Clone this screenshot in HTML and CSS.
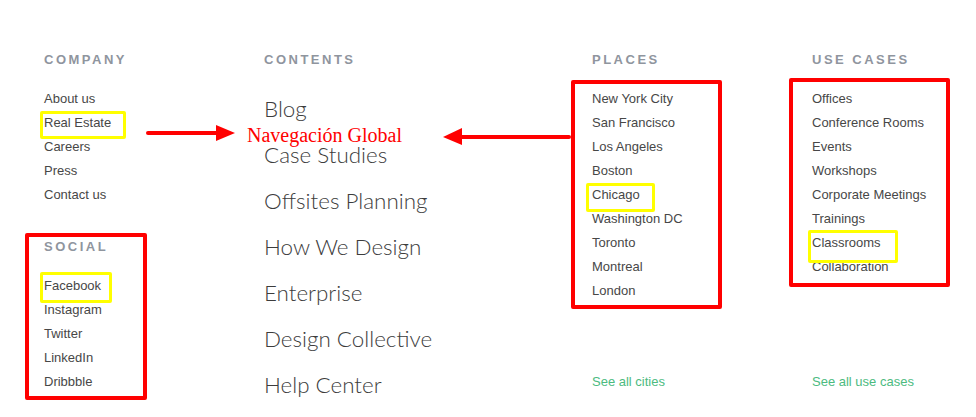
FILE: index.html
```html
<!DOCTYPE html>
<html lang="en">
<head>
<meta charset="utf-8">
<title>Footer navigation</title>
<link rel="stylesheet" href="styles.css">
</head>
<body>
<div class="page">
  <footer class="footer">
    <div class="col col-company">
      <h3 class="heading">COMPANY</h3>
      <ul class="links">
        <li>About us</li>
        <li>Real Estate</li>
        <li>Careers</li>
        <li>Press</li>
        <li>Contact us</li>
      </ul>
      <h3 class="heading heading-social">SOCIAL</h3>
      <ul class="links">
        <li>Facebook</li>
        <li>Instagram</li>
        <li>Twitter</li>
        <li>LinkedIn</li>
        <li>Dribbble</li>
      </ul>
    </div>
    <div class="col col-contents">
      <h3 class="heading">CONTENTS</h3>
      <ul class="big-links">
        <li>Blog</li>
        <li>Case Studies</li>
        <li>Offsites Planning</li>
        <li>How We Design</li>
        <li>Enterprise</li>
        <li>Design Collective</li>
        <li>Help Center</li>
      </ul>
    </div>
    <div class="col col-places">
      <h3 class="heading">PLACES</h3>
      <ul class="links">
        <li>New York City</li>
        <li>San Francisco</li>
        <li>Los Angeles</li>
        <li>Boston</li>
        <li>Chicago</li>
        <li>Washington DC</li>
        <li>Toronto</li>
        <li>Montreal</li>
        <li>London</li>
      </ul>
      <div class="see-all">See all cities</div>
    </div>
    <div class="col col-uses">
      <h3 class="heading">USE CASES</h3>
      <ul class="links">
        <li>Offices</li>
        <li>Conference Rooms</li>
        <li>Events</li>
        <li>Workshops</li>
        <li>Corporate Meetings</li>
        <li>Trainings</li>
        <li>Classrooms</li>
        <li>Collaboration</li>
      </ul>
      <div class="see-all">See all use cases</div>
    </div>
  </footer>

  <div class="annotations">
    <div class="box red box-social"></div>
    <div class="box red box-places"></div>
    <div class="box red box-uses"></div>
    <div class="box yellow box-realestate"></div>
    <div class="box yellow box-facebook"></div>
    <div class="box yellow box-chicago"></div>
    <div class="box yellow box-classrooms"></div>
    <svg class="arrow arrow-left" width="100" height="24" viewBox="0 0 100 24">
      <line x1="2" y1="10" x2="72" y2="10" stroke="#ff0000" stroke-width="4" stroke-linecap="round"/>
      <polygon points="70,2 89,10 70,18" fill="#ff0000"/>
    </svg>
    <svg class="arrow arrow-right" width="140" height="24" viewBox="0 0 140 24">
      <line x1="16" y1="11" x2="128" y2="11" stroke="#ff0000" stroke-width="4" stroke-linecap="round"/>
      <polygon points="2,11 21,2 21,19" fill="#ff0000"/>
    </svg>
    <div class="label">Navegación Global</div>
  </div>
</div>
</body>
</html>
```

FILE: styles.css
```css
* {
  box-sizing: border-box;
}

html, body {
  margin: 0;
  padding: 0;
  background: #ffffff;
}

.page {
  position: relative;
  width: 976px;
  height: 417px;
  overflow: hidden;
}

.footer {
  display: flex;
  align-items: stretch;
  padding: 52px 0 0 44px;
  font-family: "Liberation Sans", Arial, sans-serif;
}

.col {
  display: flex;
  flex-direction: column;
}

.col-company { width: 220px; }
.col-contents { width: 328px; }
.col-places { width: 220px; }
.col-uses { flex: 1; }

.heading {
  margin: 0;
  font-size: 13px;
  line-height: 16px;
  font-weight: 700;
  letter-spacing: 2.5px;
  color: #8f959e;
}

.heading-social {
  margin-top: 32px;
}

.links {
  list-style: none;
  margin: 19px 0 0;
  padding: 0;
}

.links li {
  font-size: 13px;
  line-height: 24px;
  color: #474747;
}

.big-links {
  list-style: none;
  margin: 18px 0 0;
  padding: 0;
}

.big-links li {
  font-family: Lato, "Open Sans", sans-serif;
  font-weight: 300;
  font-size: 22.4px;
  line-height: 46px;
  color: #3c3c3c;
}

.see-all {
  margin-top: auto;
  margin-bottom: 14px;
  font-size: 13px;
  line-height: 24px;
  color: #4cbb7f;
}

/* annotation overlay */
.annotations {
  position: absolute;
  inset: 0;
  pointer-events: none;
}

.box {
  position: absolute;
  border-radius: 2px;
}

.box.red {
  border: 4px solid #ff0000;
}

.box.yellow {
  border: 3px solid #ffff00;
}

.box-social { left: 25px; top: 233px; width: 122px; height: 167px; }
.box-places { left: 571px; top: 80px; width: 151px; height: 229px; }
.box-uses { left: 789px; top: 78px; width: 161px; height: 209px; }

.box-realestate { left: 40px; top: 111px; width: 86px; height: 28px; }
.box-facebook { left: 40px; top: 272px; width: 72px; height: 31px; }
.box-chicago { left: 586px; top: 183px; width: 69px; height: 29px; }
.box-classrooms { left: 808px; top: 230px; width: 90px; height: 33px; }

.arrow {
  position: absolute;
  display: block;
}

.arrow-left { left: 146px; top: 123px; }
.arrow-right { left: 441px; top: 126px; }

.label {
  position: absolute;
  left: 247px;
  top: 125px;
  font-family: "Liberation Serif", "Times New Roman", serif;
  font-size: 20px;
  line-height: 20px;
  color: #ff0000;
  white-space: nowrap;
}
```
